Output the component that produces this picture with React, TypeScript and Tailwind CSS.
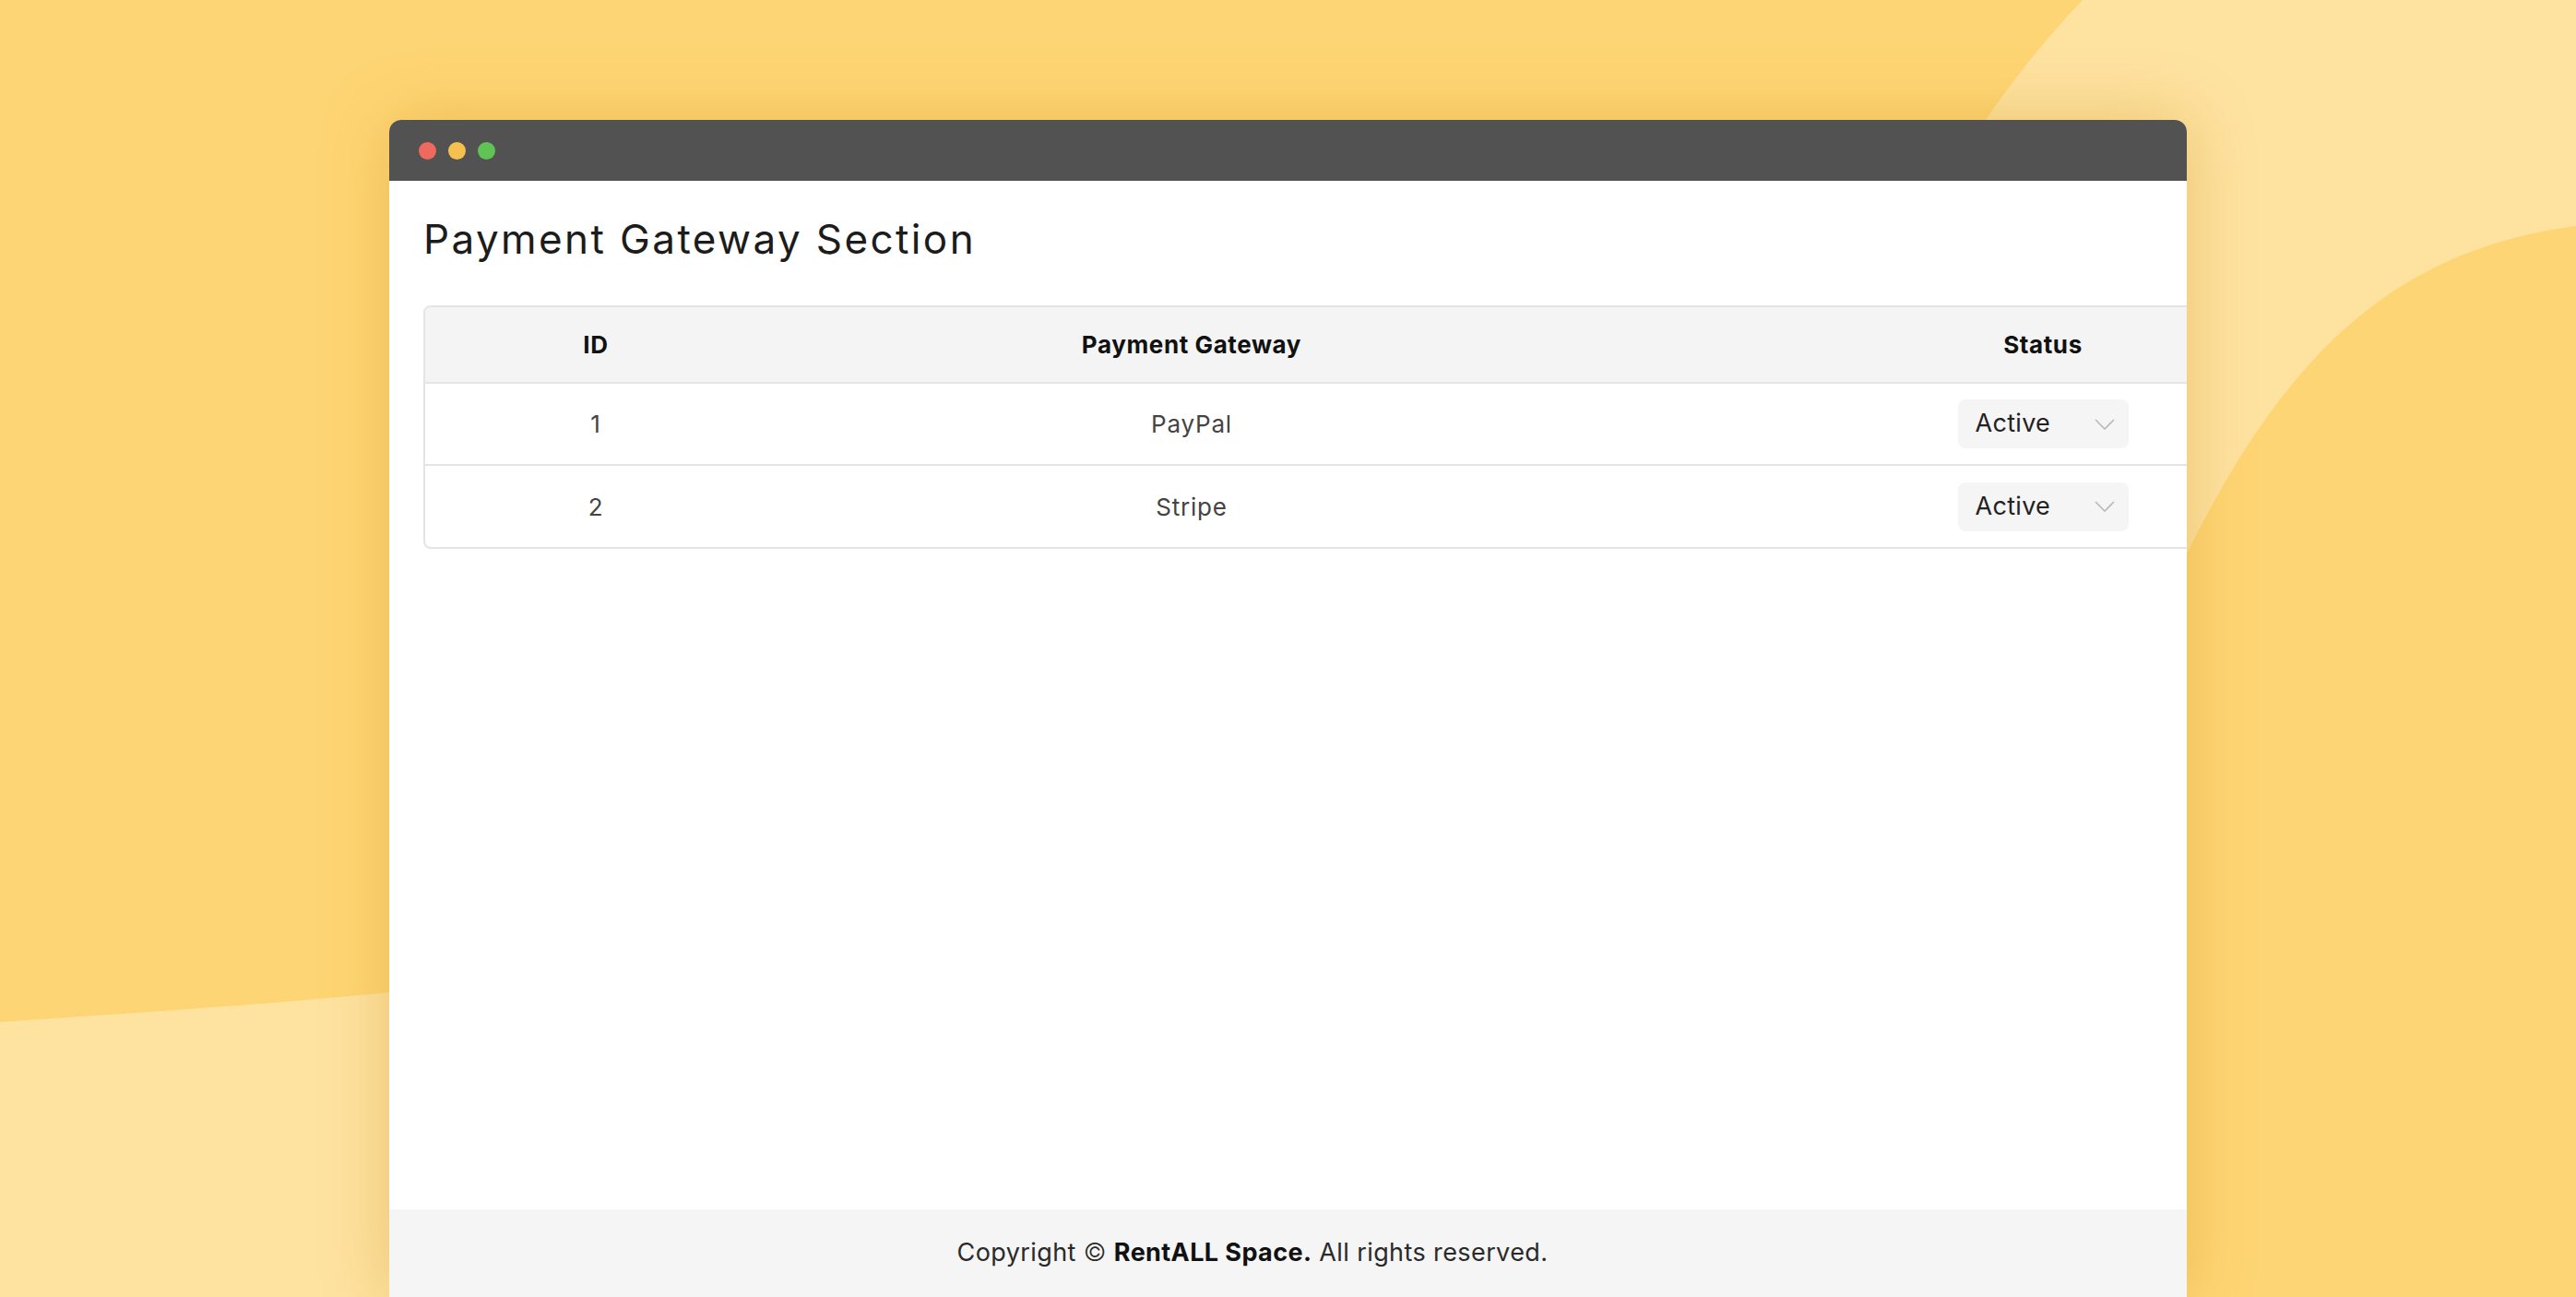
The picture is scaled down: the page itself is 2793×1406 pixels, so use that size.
const gateways = [
  { id: 1, name: "PayPal", status: "Active" },
  { id: 2, name: "Stripe", status: "Active" },
];

function Backdrop() {
  return (
    <svg
      className="absolute inset-0 h-full w-full"
      viewBox="0 0 2793 1406"
      preserveAspectRatio="none"
    >
      <rect width="2793" height="1406" fill="#fed574" />
      <path
        d="M2258 0 C2215 45 2175 95 2140 150 L2140 700 L2371 600 C2480 380 2600 270 2793 245 L2793 0 Z"
        fill="#fee2a0"
      />
      <path
        d="M0 1108 C150 1098 300 1088 430 1075 L430 1406 L0 1406 Z"
        fill="#fee2a0"
      />
    </svg>
  );
}

function StatusSelect({ value }: { value: string }) {
  return (
    <div className="flex h-[53px] w-[185px] items-center justify-between rounded-[8px] bg-[#f5f5f5] pl-[19px] pr-[15px] text-[27px] tracking-[0.3px] text-[#222]">
      <span>{value}</span>
      <svg width="22" height="12" viewBox="0 0 22 12" fill="none">
        <path d="M1 1 L11 11 L21 1" stroke="#b8b8b8" strokeWidth="1.6" />
      </svg>
    </div>
  );
}

export default function App() {
  return (
    <div
      className="relative h-[1406px] w-full overflow-hidden"
      style={{ fontFamily: "Inter, 'Noto Sans', sans-serif" }}
    >
      <Backdrop />
      <div className="relative ml-[422px] mt-[130px] flex h-[1276px] w-[1949px] flex-col overflow-hidden rounded-t-[13px] bg-white shadow-[0_0_70px_rgba(200,140,20,0.35)]">
        <div className="flex h-[66px] shrink-0 items-center gap-[13px] bg-[#525252] pl-[32px]">
          <span className="h-[19px] w-[19px] rounded-full bg-[#ee6a5f]" />
          <span className="h-[19px] w-[19px] rounded-full bg-[#f6c04f]" />
          <span className="h-[19px] w-[19px] rounded-full bg-[#5fc454]" />
        </div>

        <div className="flex-1 pl-[37px] pt-[31px]">
          <h1 className="text-[44px] leading-[64px] tracking-[2.4px] text-[#1c1c1c]">
            Payment Gateway Section
          </h1>

          <div className="mt-[40px] w-[2220px] overflow-hidden rounded-[8px] border-2 border-[#e4e4e4]">
            <table className="w-full border-collapse text-center">
              <thead className="bg-[#f4f4f4]">
                <tr className="h-[82px] text-[26px] font-bold tracking-[0.6px] text-[#111]">
                  <th className="w-[370px]">ID</th>
                  <th className="w-[922px]">Payment Gateway</th>
                  <th>Status</th>
                </tr>
              </thead>
              <tbody>
                {gateways.map((g) => (
                  <tr
                    key={g.id}
                    className="h-[89px] border-t-2 border-[#e4e4e4] text-[26px] tracking-[0.8px] text-[#444]"
                  >
                    <td>{g.id}</td>
                    <td>{g.name}</td>
                    <td>
                      <div className="flex justify-center">
                        <StatusSelect value={g.status} />
                      </div>
                    </td>
                  </tr>
                ))}
              </tbody>
            </table>
          </div>
        </div>

        <div className="flex h-[95px] shrink-0 items-center bg-[#f5f5f5]">
          <p className="w-[1872px] text-center text-[27px] tracking-[0.4px] text-[#2a2a2a]">
            Copyright <span className="font-light">©</span>{" "}
            <span className="font-bold text-[#111]">RentALL Space.</span> All rights reserved.
          </p>
        </div>
      </div>
    </div>
  );
}
